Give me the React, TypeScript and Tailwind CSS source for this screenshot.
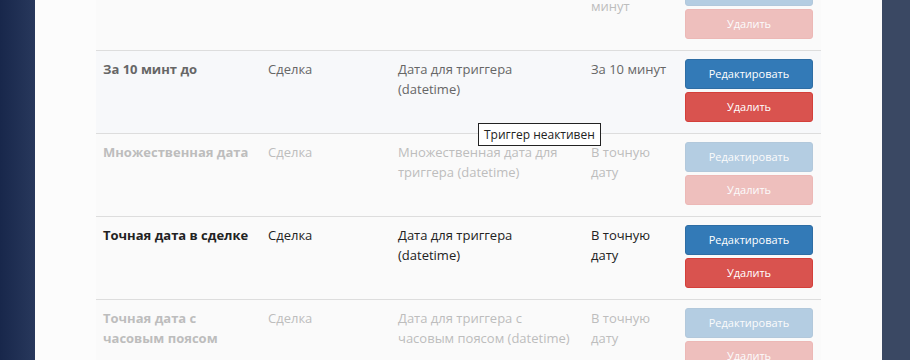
import React from "react";

type Row = {
  name: string;
  entity: string;
  field: string;
  when: string;
  active: boolean;
  muted?: boolean;
};

const rows: Row[] = [
  { name: "Через 10 минут", entity: "Сделка", field: "Дата сделки", when: "Через 10 минут", active: false },
  { name: "За 10 минт до", entity: "Сделка", field: "Дата для триггера (datetime)", when: "За 10 минут", active: true, muted: true },
  { name: "Множественная дата", entity: "Сделка", field: "Множественная дата для триггера (datetime)", when: "В точную дату", active: false },
  { name: "Точная дата в сделке", entity: "Сделка", field: "Дата для триггера (datetime)", when: "В точную дату", active: true },
  { name: "Точная дата с часовым поясом", entity: "Сделка", field: "Дата для триггера с часовым поясом (datetime)", when: "В точную дату", active: false },
];

const TriggerRow = ({ row }: { row: Row }) => {
  const text = !row.active ? "text-[#bdbdbd]" : row.muted ? "text-[#666]" : "text-[#222]";
  const bg = row.muted ? "bg-[#f7f8fa]" : "bg-[#fafafa]";
  return (
    <div className={`grid h-[83px] grid-cols-[165px_130px_193px_94px_143px] border-t border-[#dddddd] pt-2 text-[13px] leading-5 ${bg} ${text}`}>
      <div className="pl-[7px] pr-2 font-bold">{row.name}</div>
      <div className="pl-[7px] pr-2">{row.entity}</div>
      <div className="pl-[7px] pr-2">{row.field}</div>
      <div className="pl-[7px] pr-2">{row.when}</div>
      <div className={`flex flex-col gap-[3px] pl-[7px] pr-2 ${row.active ? "" : "opacity-35"}`}>
        <button className="h-[30px] w-[128px] rounded-[3px] border border-[#2e6da4] bg-[#337ab7] text-[11px] text-white">
          Редактировать
        </button>
        <button className="h-[30px] w-[128px] rounded-[3px] border border-[#d43f3a] bg-[#d9534f] text-[11px] text-white">
          Удалить
        </button>
      </div>
    </div>
  );
};

const App = () => {
  return (
    <div className="flex h-[360px] w-[910px] overflow-hidden bg-[#3a4863] font-['Open_Sans',sans-serif]">
      {/* left sidebar edge */}
      <div className="w-[35px] shrink-0 bg-gradient-to-r from-[#18274b] to-[#28385c]" />
      {/* content panel */}
      <div className="relative w-[847px] shrink-0 bg-[#fcfcfc]">
        <div className="-mt-[33px] ml-[61px] w-[725px]">
          {rows.map((r, i) => (
            <TriggerRow key={i} row={r} />
          ))}
        </div>
        <div className="absolute left-[443px] top-[123px] border border-[#222] bg-white px-[5px] py-[2px] text-[12px] leading-[17px] text-[#222]">
          Триггер неактивен
        </div>
      </div>
      <div className="flex-1 bg-[#3a4863]" />
    </div>
  );
};

export default App;
